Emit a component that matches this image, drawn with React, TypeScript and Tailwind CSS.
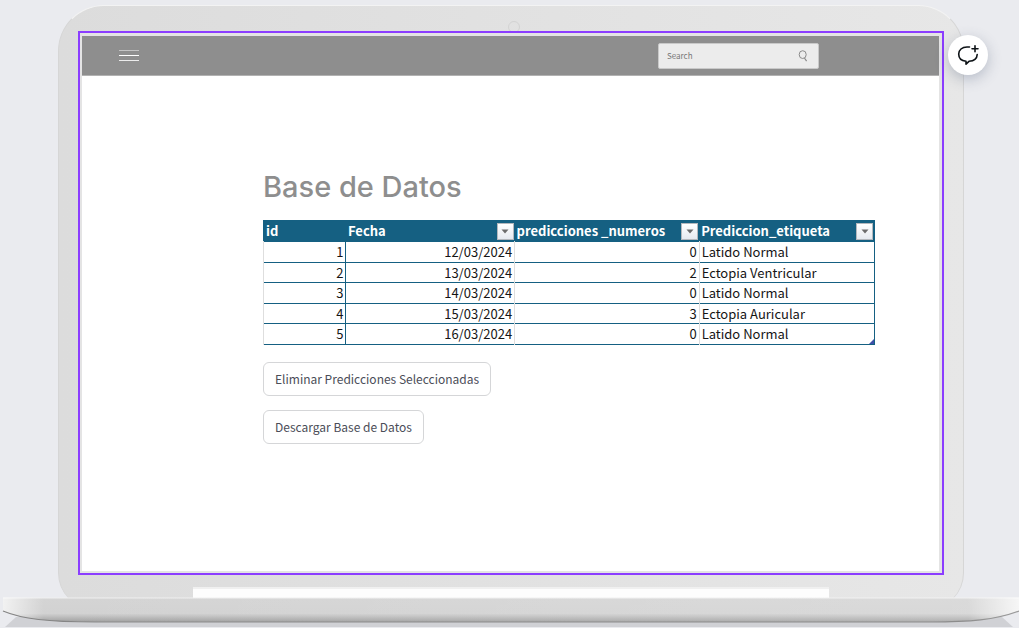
type Prediction = { id: number; date: string; value: number; label: string };

const predictions: Prediction[] = [
  { id: 1, date: "12/03/2024", value: 0, label: "Latido Normal" },
  { id: 2, date: "13/03/2024", value: 2, label: "Ectopia Ventricular" },
  { id: 3, date: "14/03/2024", value: 0, label: "Latido Normal" },
  { id: 4, date: "15/03/2024", value: 3, label: "Ectopia Auricular" },
  { id: 5, date: "16/03/2024", value: 0, label: "Latido Normal" },
];

function HeaderCell({ text, filter = true }: { text: string; filter?: boolean }) {
  return (
    <th scope="col" className="p-0 pl-[2px] text-left font-bold">
      <div className="flex items-center justify-between whitespace-nowrap">
        <span>{text}</span>
        {filter && (
          <button
            type="button"
            aria-label={`Filtrar ${text}`}
            className="mr-px flex size-[17px] shrink-0 items-center justify-center border border-[#b4b8bd] bg-linear-to-b from-white to-[#e6eaf0]"
          >
            <svg width="8" height="5" viewBox="0 0 8 5" aria-hidden="true">
              <path d="M0.5 0.5h7L4 4.5z" fill="#6c6c6c" />
            </svg>
          </button>
        )}
      </div>
    </th>
  );
}

function TopBar() {
  return (
    <header className="flex h-10 items-center justify-between border-b border-[#b2b2b2] bg-[#8e8e8e] pr-[120px] pl-[37px]">
      <button type="button" aria-label="Menú" className="flex">
        <svg width="20" height="12" viewBox="0 0 20 12" aria-hidden="true">
          <path d="M0 0.5h20" stroke="#c4c4c4" />
          <path d="M0 5.500h20" stroke="#ffffff" />
          <path d="M0 10.500h20" stroke="#ececec" />
        </svg>
      </button>
      <label className="flex h-[26px] w-[161px] items-center rounded-xs border border-[#c9c9c9] bg-[#ececec] pr-2.5 pl-2">
        <input
          type="search"
          aria-label="Search"
          placeholder="Search"
          className="w-full min-w-0 bg-transparent font-['Noto_Sans_CJK_SC','Open_Sans',sans-serif] text-[8px] text-[#666] outline-none placeholder:text-[#777]"
        />
        <svg width="10" height="12" viewBox="0 0 10 12" fill="none" stroke="#8b8b8b" className="shrink-0" aria-hidden="true">
          <ellipse cx="4.7" cy="4.6" rx="3.5" ry="3.9" />
          <path d="M6.4 8l2.2 3.2" strokeWidth="1.2" />
        </svg>
      </label>
    </header>
  );
}

function PredictionTable() {
  return (
    <table className="mt-[13px] w-full table-fixed border-collapse border border-[#156082] font-['Noto_Sans_CJK_SC','Noto_Sans',sans-serif] text-[13px] leading-[18px] text-[#151515]">
      <colgroup>
        <col className="w-[13.5%]" />
        <col className="w-[27.6%]" />
        <col className="w-[30.2%]" />
        <col />
      </colgroup>
      <thead>
        <tr className="h-[21px] bg-[#156082] text-white">
          <HeaderCell text="id" filter={false} />
          <HeaderCell text="Fecha" />
          <HeaderCell text="predicciones _numeros" />
          <HeaderCell text="Prediccion_etiqueta" />
        </tr>
      </thead>
      <tbody>
        {predictions.map((p) => (
          <tr key={p.id} className="border-y border-[#156082] odd:h-[21px] even:h-5">
            <td className="border-r border-[#156082] border-l border-l-[#dedede] p-0 pr-[2px] text-right">{p.id}</td>
            <td className="border-r border-r-[#dedede] p-0 pr-[2px] text-right">{p.date}</td>
            <td className="border-r border-r-[#dedede] p-0 pr-[2px] text-right">{p.value}</td>
            <td className="relative p-0 pl-[2px]">
              {p.label}
              {p.id === predictions.length && (
                <span className="absolute right-0 bottom-0 size-[5px] bg-[#3d4fa8] [clip-path:polygon(100%_0,100%_100%,0_100%)]" />
              )}
            </td>
          </tr>
        ))}
      </tbody>
    </table>
  );
}

const actions = ["Eliminar Predicciones Seleccionadas", "Descargar Base de Datos"];

function LaptopBase() {
  return (
    <svg viewBox="0 0 1019 31" preserveAspectRatio="none" className="relative block h-[31px] w-full shrink-0" aria-hidden="true">
      <defs>
        <linearGradient id="body" x1="0" y1="0" x2="0" y2="1">
          <stop offset="0" stopColor="#f0f0f0" />
          <stop offset="0.08" stopColor="#d4d4d4" />
          <stop offset="0.65" stopColor="#d2d2d2" />
          <stop offset="0.75" stopColor="#c4c4c4" />
          <stop offset="1" stopColor="#a0a0a0" />
        </linearGradient>
        <linearGradient id="shine" x1="0" y1="0" x2="1" y2="0">
          <stop offset="0" stopColor="#fff" stopOpacity="0.7" />
          <stop offset="0.04" stopColor="#fff" stopOpacity="0" />
          <stop offset="0.6" stopColor="#fff" stopOpacity="0.1" />
          <stop offset="0.95" stopColor="#fff" stopOpacity="0.15" />
          <stop offset="1" stopColor="#fff" stopOpacity="0.8" />
        </linearGradient>
        <linearGradient id="line" x1="0" y1="0" x2="1" y2="0">
          <stop offset="0" stopColor="#858585" />
          <stop offset="0.06" stopColor="#858585" />
          <stop offset="0.1" stopColor="#8c8c8c" />
          <stop offset="0.94" stopColor="#8c8c8c" />
          <stop offset="1" stopColor="#9c9c9c" />
        </linearGradient>
      </defs>
      <path d="M16 20L5 30h1008l-11-10z" fill="#d0d1d5" />
      <path d="M3 0.5H1019V14C995 23 970 25 930 25H95C48 25 22 22 3 14Z" fill="url(#body)" />
      <path d="M3 0.5H1019V14C995 23 970 25 930 25H95C48 25 22 22 3 14Z" fill="url(#shine)" />
      <path d="M3 14C22 22 48 25 95 25H930C970 25 995 23 1019 14" fill="none" stroke="url(#line)" strokeWidth="1.2" />
    </svg>
  );
}

export default function App() {
  return (
    <div className="relative flex min-h-screen flex-col bg-[#eaebef] pt-[5px]">
      <div className="mr-[55px] -mb-3 ml-[58px] flex flex-1 flex-col rounded-t-[46px] rounded-b-[36px] border-x border-t border-x-[#d6d6d6] border-t-[#f3f3f3] bg-linear-to-r from-[#dcdcdc] to-[#e7e7e7] pr-[19px] pl-[19px]">
        <div className="flex h-[25px] items-end justify-center overflow-hidden pl-1.5">
          <span className="-mb-0.5 size-3 rounded-full border border-[#d3d3d3]" />
        </div>
        <main className="flex flex-1 flex-col border-2 border-[#8b3dff] bg-[#e4e4e4] pt-[3px] pr-[3px] pb-[2px] pl-[2px]">
          <TopBar />
          <section className="flex-1 bg-white pt-[91px] pr-16 pb-10 pl-[181px]">
            <h1 className="font-['Inter',sans-serif] text-[29px] leading-10 font-medium text-[#8e8e8e]">Base de Datos</h1>
            <PredictionTable />
            <div className="mt-[17px] flex flex-col items-start gap-[14px]">
              {actions.map((action) => (
                <button
                  key={action}
                  type="button"
                  className="h-[34px] rounded-md border border-[#d5d6d8] px-[11px] font-['Noto_Sans_CJK_SC','Noto_Sans',sans-serif] text-[12px] text-[#4b4d58]"
                >
                  {action}
                </button>
              ))}
            </div>
          </section>
        </main>
        <div className="flex h-[34px] items-start pt-3 pr-[115px] pl-[115px]">
          <div className="h-[12px] w-full border-t-2 border-[#f0f0f0] bg-[#fdfdfd]" />
        </div>
      </div>
      <LaptopBase />
      <button
        type="button"
        aria-label="Añadir comentario"
        className="absolute top-[35px] right-[31px] flex size-10 items-center justify-center rounded-full bg-white shadow-[0_4px_14px_rgba(64,79,109,0.3)]"
      >
        <svg width="24" height="24" viewBox="0 0 24 24" fill="none" stroke="#0d1216" strokeWidth="1.6" strokeLinecap="round" strokeLinejoin="round" aria-hidden="true">
          <path d="M13.500 4H11C6 4 2.700 7 2.700 11C2.700 15.200 5.500 17.800 10 18.300V21.200L13 18.300C18 18 21 15.500 21.200 11.500" />
          <path d="M19 2.800v6M16 5.800h6" />
        </svg>
      </button>
    </div>
  );
}
